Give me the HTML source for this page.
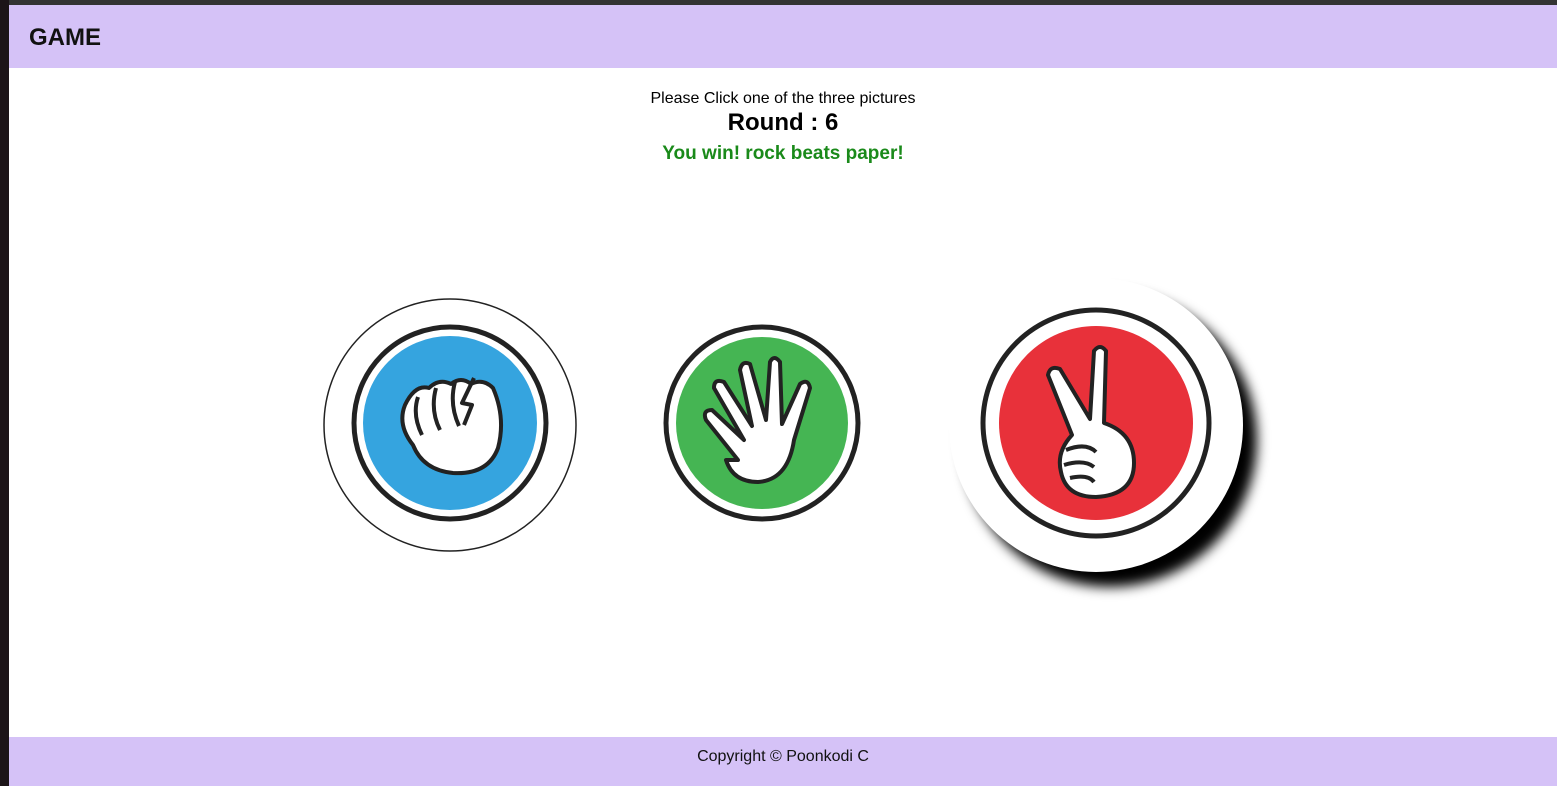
<!DOCTYPE html>
<html><head><style>
body{margin:0;width:1557px;height:786px;position:relative;background:#fff;font-family:"Liberation Sans",sans-serif;overflow:hidden}
.top{position:absolute;left:0;top:0;width:1557px;height:5px;background:#333}
.left{position:absolute;left:0;top:0;width:9px;height:786px;background:#1c1418}
.hdr{position:absolute;left:9px;top:5px;right:0;height:63px;background:#d5c2f7}
.hdr b{position:absolute;left:20px;top:19px;font-size:24px;color:#111}
.ftr{position:absolute;left:9px;top:737px;right:0;height:49px;background:#d5c2f7;text-align:center;font-size:16px;line-height:38px;color:#111}
.t{position:absolute;left:0;width:1566px;text-align:center}
</style></head><body>
<div class="top"></div><div class="left"></div>
<div class="hdr"><b>GAME</b></div>
<div class="t" style="top:90px;font-size:16px">Please Click one of the three pictures</div>
<div class="t" style="top:109px;font-size:24px;font-weight:bold">Round : 6</div>
<div class="t" style="top:143px;font-size:19px;font-weight:bold;color:#1a8a1a">You win! rock beats paper!</div>
<svg width="1557" height="786" style="position:absolute;left:0;top:0">
<defs><filter id="sh" x="-30%" y="-30%" width="160%" height="160%"><feGaussianBlur stdDeviation="6"/></filter></defs>
<circle cx="450" cy="425" r="126" fill="#fff" stroke="#222" stroke-width="1.5"/>
<circle cx="450" cy="423" r="96" fill="#fff" stroke="#222" stroke-width="5"/>
<circle cx="450" cy="423" r="87" fill="#35a4df"/>
<g fill="#fff" stroke="#222" stroke-width="4" stroke-linejoin="round">
<path d="M405 405 q-8 20 8 40 q10 25 40 28 q35 2 45 -25 q8 -30 -5 -60 q-10 -10 -22 -4 q-10 -8 -20 0 q-12 -6 -22 4 q-14 -4 -24 17z"/>
<path d="M418 397 q-6 18 4 38 M436 388 q-6 22 4 42 M455 382 q-6 22 4 44 M474 378 l-12 25 l10 2 l-8 20" fill="none"/>
</g>
<circle cx="762" cy="423" r="96" fill="#fff" stroke="#222" stroke-width="5"/>
<circle cx="762" cy="423" r="86" fill="#45b553"/>
<path d="M738 460 l-32 -40 q-4 -10 6 -10 l32 30 l-30 -52 q0 -10 10 -6 l28 44 l-12 -56 q2 -10 10 -6 l16 56 l4 -58 q4 -8 10 0 l2 62 l18 -40 q8 -6 10 4 l-16 52 q-6 40 -36 42 q-25 0 -32 -22z" fill="#fff" stroke="#222" stroke-width="4" stroke-linejoin="round"/>
<circle cx="1110" cy="440" r="147" fill="#000" filter="url(#sh)"/>
<circle cx="1096" cy="425" r="147" fill="#fff"/>
<circle cx="1096" cy="423" r="113" fill="#fff" stroke="#222" stroke-width="5"/>
<circle cx="1096" cy="423" r="97" fill="#e8313a"/>
<g fill="#fff" stroke="#222" stroke-width="4" stroke-linejoin="round">
<path d="M1072 435 l-24 -60 q2 -10 12 -6 l30 50 l4 -68 q6 -8 12 0 l-2 72 q30 10 30 40 q0 32 -38 34 q-30 0 -35 -25 q-5 -20 11 -37z"/>
<path d="M1066 450 q20 -8 30 2 M1064 465 q20 -6 30 2 M1070 478 q18 -4 24 4" fill="none"/>
</g>
</svg>
<div class="ftr" style="line-height:40px">Copyright © Poonkodi C</div>
</body></html>
